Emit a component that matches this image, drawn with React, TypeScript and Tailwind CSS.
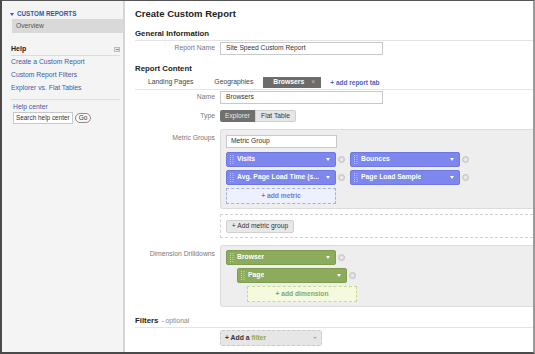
import React from "react";

const Grip = () => (
  <svg width="4" height="9" viewBox="0 0 4 9" className="ml-[3px] mr-[3px] shrink-0">
    {[0.5, 2.5, 4.5, 6.5, 8.5].map((y) => (
      <g key={y}>
        <rect x="0" y={y - 0.5} width="1" height="1" fill="rgba(255,255,255,0.55)" />
        <rect x="2.5" y={y - 0.5} width="1" height="1" fill="rgba(255,255,255,0.55)" />
      </g>
    ))}
  </svg>
);

const Remove = () => (
  <div className="ml-[2px] w-[7px] h-[7px] rounded-full bg-[#d9d9d9] border border-[#c4c4c4] flex items-center justify-center">
    <div className="w-[3px] h-[3px] rounded-full bg-[#ececec]" />
  </div>
);

const Chip = ({ label, tone }: { label: string; tone: string }) => (
  <div className="flex items-center">
    <div
      className={`h-[15px] w-[110px] rounded-[2px] flex items-center text-white font-bold text-[6.8px] ${tone}`}
    >
      <Grip />
      <span className="truncate">{label}</span>
      <span className="ml-auto mr-[5px] w-0 h-0 border-l-[2.5px] border-r-[2.5px] border-t-[3px] border-l-transparent border-r-transparent border-t-white" />
    </div>
    <Remove />
  </div>
);

const Row = ({ label, children, top = false }: { label: string; children: React.ReactNode; top?: boolean }) => (
  <div className={`flex ${top ? "items-start" : "items-center"}`}>
    <div className={`w-[85px] shrink-0 pr-[5px] text-right whitespace-nowrap text-[6.8px] text-[#777] ${top ? "pt-[4px]" : ""}`}>{label}</div>
    {children}
  </div>
);

export default function App() {
  return (
    <div className="w-[535px] h-[354px] flex border-t border-l-2 border-b-2 border-r-2 border-t-[#555] border-l-[#4a4a4a] border-b-[#4a4a4a] border-r-[#9a9a9a] bg-white overflow-hidden font-['Liberation_Sans',Arial,sans-serif] text-[#333]">
      {/* sidebar */}
      <div className="w-[123px] shrink-0 bg-[#f4f4f4] border-r-2 border-[#d6d6d6] pt-[8px]">
        <div className="h-[10px] flex items-center pl-[8px]">
          <span className="w-0 h-0 border-l-[2px] border-r-[2px] border-t-[3px] border-l-transparent border-r-transparent border-t-[#3c5aa8] mr-[3px]" />
          <span className="text-[6.3px] font-bold text-[#2f56a8]">CUSTOM REPORTS</span>
        </div>
        <div className="ml-[10px] h-[14px] bg-[#d9d9d9] flex items-center pl-[4px] text-[6.7px] text-[#555]">Overview</div>
        <div className="mt-[11px] mx-[9px] mr-[3px] h-[12px] border-b border-[#dcdcdc] flex items-center justify-between">
          <span className="text-[7px] font-bold text-[#222]">Help</span>
          <span className="w-[6px] h-[5px] border border-[#bbb] bg-[#e8e8e8] flex items-center justify-center">
            <span className="w-[3px] h-px bg-[#888]" />
          </span>
        </div>
        {["Create a Custom Report", "Custom Report Filters", "Explorer vs. Flat Tables"].map((t) => (
          <div key={t} className="h-[13px] flex items-center pl-[9px] text-[6.8px] text-[#3a5cab]">
            {t}
          </div>
        ))}
        <div className="mt-[4px] mx-[9px] mr-[3px] border-t border-[#dedede]" />
        <div className="h-[10px] mt-[2px] flex items-center pl-[11px] text-[6.8px] text-[#3a5cab]">Help center</div>
        <div className="flex items-center pl-[11px] h-[12px]">
          <div className="w-[60px] h-[12px] bg-white border border-[#c8c8c8] flex items-center pl-[2px] text-[6.4px] text-[#333] whitespace-nowrap overflow-hidden">
            Search help center
          </div>
          <div className="ml-[2px] w-[16px] h-[10px] rounded-full border border-[#8a8a8a] bg-[#f8f8f8] flex items-center justify-center text-[6.5px] text-[#333]">
            Go
          </div>
        </div>
      </div>

      {/* main */}
      <div className="flex-1 pl-[10px] flex flex-col">
        <div className="h-[27px] flex items-center text-[9.5px] font-bold text-[#222]">Create Custom Report</div>
        <div className="h-[13px] border-b border-[#e4e4e4] flex items-center text-[7.8px] font-bold text-[#222]">General Information</div>
        <div className="mt-[1px]">
          <Row label="Report Name">
            <div className="w-[163px] h-[13px] border border-[#c8c8c8] flex items-center pl-[5px] text-[6.7px]">Site Speed Custom Report</div>
          </Row>
        </div>
        <div className="mt-[8px] h-[12px] flex items-center text-[7.8px] font-bold text-[#222]">Report Content</div>
        <div className="mt-[1px] h-[14px] border-b border-[#e4e4e4] flex items-start pt-[1px] text-[6.8px]">
          <span className="ml-[13px] h-[11px] flex items-center text-[#444]">Landing Pages</span>
          <span className="ml-[21px] h-[11px] flex items-center text-[#444]">Geographies</span>
          <span className="ml-[10px] w-[58px] h-[11px] bg-[#6c6c6c] flex items-center pl-[10px] text-white font-bold">
            Browsers<span className="ml-[7px] font-normal text-[#bbb]">×</span>
          </span>
          <span className="ml-[9px] h-[11px] flex items-center text-[6.5px] font-bold text-[#4a63c8]">+ add report tab</span>
        </div>
        <div className="mt-[1px]">
          <Row label="Name">
            <div className="w-[163px] h-[13px] border border-[#c8c8c8] flex items-center pl-[5px] text-[6.7px]">Browsers</div>
          </Row>
        </div>
        <div className="mt-[6px]">
          <Row label="Type">
            <div className="flex h-[12px] text-[6.7px]">
              <div className="w-[35px] rounded-l-[2px] bg-[#707070] text-[#e6e6e6] flex items-center justify-center">Explorer</div>
              <div className="w-[41px] rounded-r-[2px] bg-[#e6e6e6] border border-[#cfcfcf] flex items-center justify-center text-[#333]">Flat Table</div>
            </div>
          </Row>
        </div>
        <div className="mt-[7px]">
          <Row label="Metric Groups" top>
            <div className="flex-1 h-[80px] bg-[#eeeeee] border border-r-0 border-[#dcdcdc] rounded-l-[3px] pt-[5px] pl-[5px]">
              <div className="w-[111px] h-[13px] bg-white border border-[#c8c8c8] flex items-center pl-[4px] text-[6.7px]">Metric Group</div>
              <div className="mt-[4px] flex flex-col gap-[3px]">
                <div className="flex items-center gap-[5px]">
                  <Chip label="Visits" tone="bg-[#7d87ee] border border-[#6e78e0]" />
                  <Chip label="Bounces" tone="bg-[#7d87ee] border border-[#6e78e0]" />
                </div>
                <div className="flex items-center gap-[5px]">
                  <Chip label="Avg. Page Load Time (s..." tone="bg-[#7d87ee] border border-[#6e78e0]" />
                  <Chip label="Page Load Sample" tone="bg-[#7d87ee] border border-[#6e78e0]" />
                </div>
                <div className="w-[110px] h-[16px] bg-[#eef1fc] border border-dashed border-[#a6aee6] flex items-center justify-center text-[6.7px] font-bold text-[#6f7bdc]">
                  + add metric
                </div>
              </div>
            </div>
          </Row>
        </div>
        <div className="mt-[5px] ml-[85px] h-[24px] border border-r-0 border-dashed border-[#d2d2d2] flex items-center pl-[5px]">
          <div className="w-[68px] h-[13px] rounded-[2px] bg-[#e8e8e8] border border-[#d0d0d0] flex items-center justify-center text-[6.7px] text-[#333]">
            + Add metric group
          </div>
        </div>
        <div className="mt-[7px]">
          <Row label="Dimension Drilldowns" top>
            <div className="flex-1 h-[62px] bg-[#eeeeee] border border-r-0 border-[#dcdcdc] rounded-l-[3px] pt-[4px] pl-[5px] flex flex-col gap-[3px]">
              <Chip label="Browser" tone="bg-[#8dab5c] border border-[#7f9c4f]" />
              <div className="ml-[11px]">
                <Chip label="Page" tone="bg-[#8dab5c] border border-[#7f9c4f]" />
              </div>
              <div className="ml-[21px] w-[110px] h-[16px] bg-[#f5fadf] border border-dashed border-[#c6da95] flex items-center justify-center text-[6.7px] font-bold text-[#8aa85a]">
                + add dimension
              </div>
            </div>
          </Row>
        </div>
        <div className="mt-[8px] h-[13px] border-b border-[#e4e4e4] flex items-center text-[7.8px] text-[#222]">
          <span className="font-bold">Filters</span>
          <span className="ml-[3px] text-[6.8px] text-[#888]">- optional</span>
        </div>
        <div className="mt-[2px] ml-[85px] w-[102px] h-[16px] bg-[#e6e6e6] border border-dashed border-[#cacaca] rounded-[2px] flex items-center pl-[4px] text-[6.8px] font-bold text-[#333]">
          + Add a<span className="ml-[2px] text-[#8aa85a]">filter</span>
          <span className="ml-auto mr-[4px] w-0 h-0 border-l-[2px] border-r-[2px] border-t-[2.5px] border-l-transparent border-r-transparent border-t-[#aaa]" />
        </div>
      </div>
    </div>
  );
}
